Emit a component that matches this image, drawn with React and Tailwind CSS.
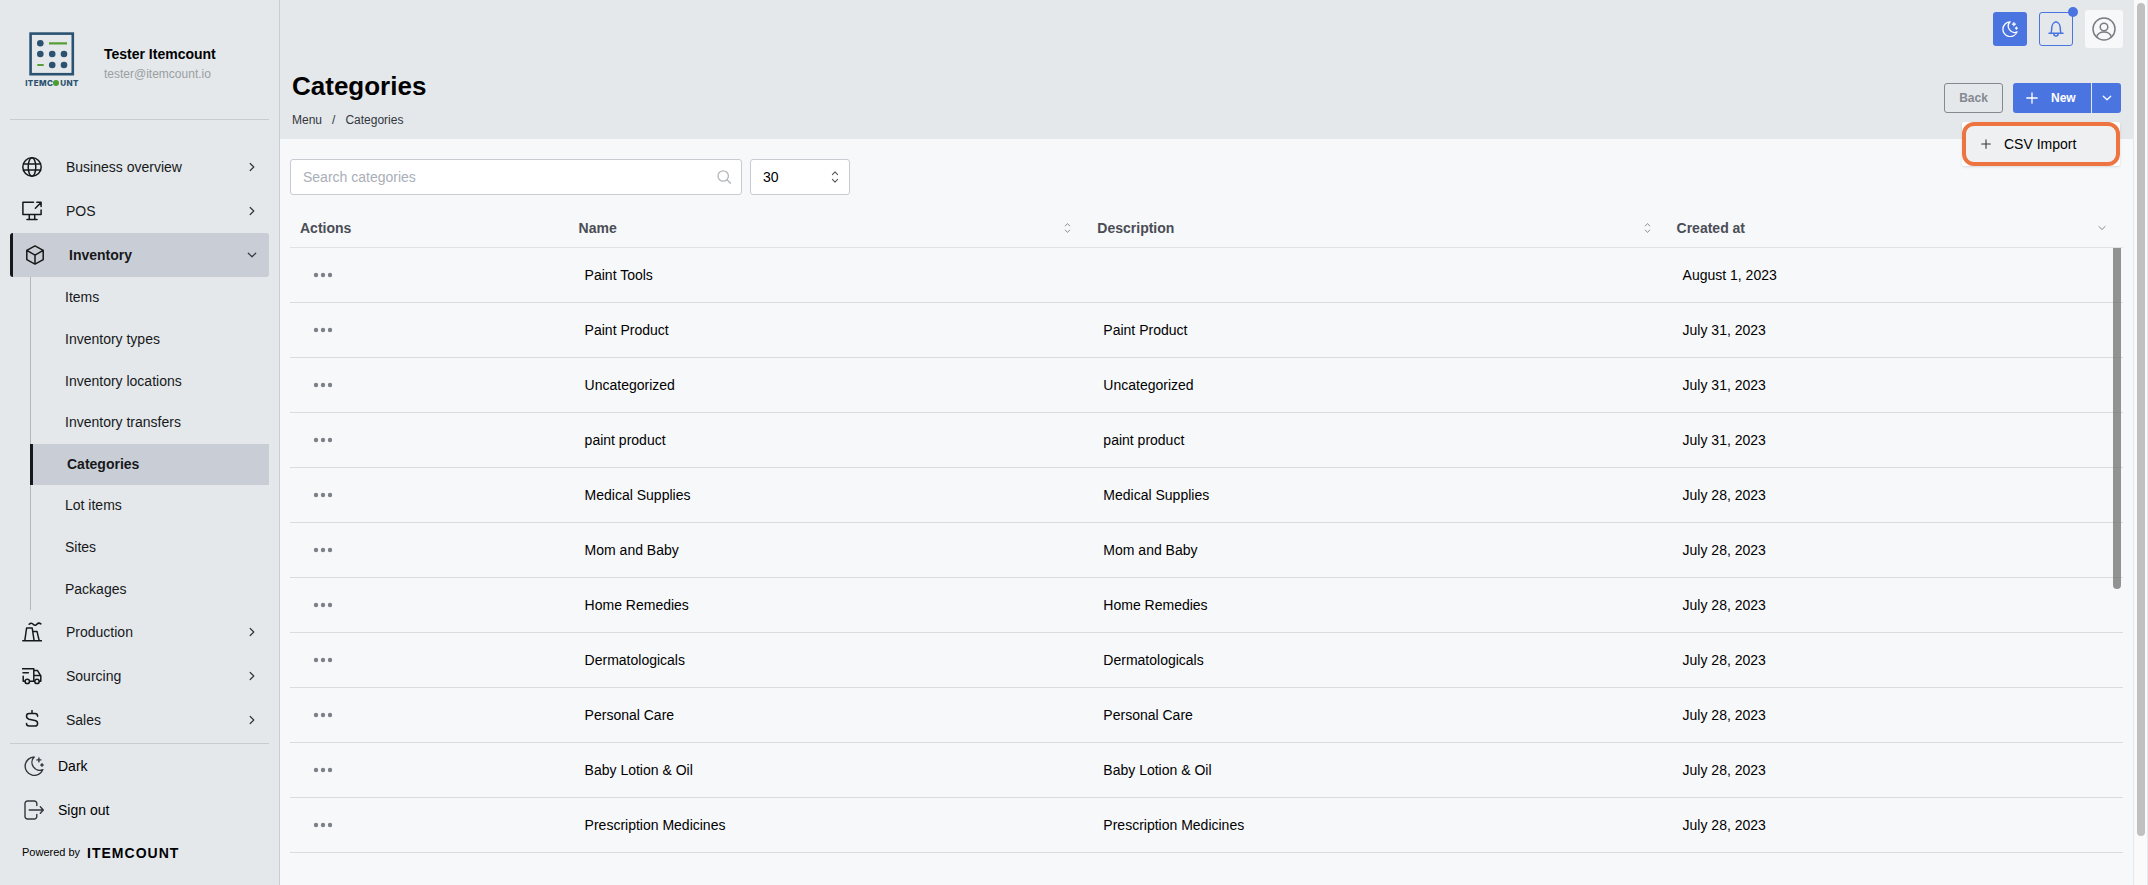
import React from "react";

const Icon = ({ children, className = "size-5", box = "0 0 20 20", width = 1.5 }) => (
  <svg
    viewBox={box}
    className={className}
    fill="none"
    stroke="currentColor"
    strokeWidth={width}
    strokeLinecap="round"
    strokeLinejoin="round"
    aria-hidden="true"
  >
    {children}
  </svg>
);

const GlobeIcon = () => (
  <Icon>
    <circle cx="10" cy="10" r="9.2" />
    <ellipse cx="10" cy="10" rx="3.8" ry="9.2" />
    <path d="M1.5 7h17M1.5 13h17" />
  </Icon>
);

const PosIcon = () => (
  <Icon>
    <path d="M11.5 1.2H.9v12.4h18.2V9M7.3 13.6v4.6M12.7 13.6v4.6M5 18.5h10" />
    <path d="M13.4 7.2l5.6-5.8M14.8 1.2h4.3v4.4" />
  </Icon>
);

const BoxIcon = () => (
  <Icon>
    <path d="M10 .9l8.2 4.5v9.2L10 19.1l-8.2-4.5V5.4L10 .9zM1.8 5.4l8.2 4.7 8.2-4.7M10 10.1v9" />
  </Icon>
);

const PlantIcon = () => (
  <Icon>
    <path d="M.8 18.8h18.8M2.8 18.6L4.6 6h5.6l1.9 12.6M11 9.4h4l2.2 9.2" />
    <path d="M7.2 2.3c1.3-1.6 2.9-1.4 4 0s2.6 1.4 3.7 0 2.6-1.4 4-.4" />
  </Icon>
);

const TruckIcon = () => (
  <Icon>
    <path d="M.4 2.8h11.4v12.4M1 6.7h5.4M1.2 10.2v5h1.5M7.8 15.2h4.6M11.8 4.4h3.6l3.4 5.4v5.4h-1.3M11.8 9.6h7" />
    <circle cx="5.3" cy="15.4" r="2.2" />
    <circle cx="15" cy="15.4" r="2.2" />
  </Icon>
);

const DollarIcon = () => (
  <Icon>
    <path d="M10 .4v3M15.6 6.2C15.6 4.600 14.600 3.600 13 3.600H7.200C5.600 3.600 4.500 4.700 4.500 6.300s1 2.500 2.500 2.900l6 1.300c1.600.4 2.600 1.300 2.600 2.900 0 1.700-1.100 2.700-2.800 2.700H7.200c-1.600 0-2.700-1-2.700-2.500" />
  </Icon>
);

const MoonIcon = ({ className = "size-5", width = 1.4 }) => (
  <Icon className={className} width={width}>
    <path d="M10.200 1A9.200 9.200 0 1 0 18.900 13.600 7.800 7.800 0 0 1 10.200 1z" />
    <path d="M14.900 1.900v4M12.900 3.900h4M18 7.800v2.400M16.800 9h2.400" />
  </Icon>
);

const SignOutIcon = () => (
  <Icon width={1.4}>
    <path d="M12.800 5.500V3.500A2.500 2.500 0 0 0 10.300 1H3.500A2.500 2.500 0 0 0 1 3.500v13A2.500 2.500 0 0 0 3.500 19h6.800a2.500 2.500 0 0 0 2.500-2.500v-2M5.200 10h14M16.300 6.800l3 3.200-3 3.200" />
  </Icon>
);

const BellIcon = () => (
  <Icon className="size-4" box="0 0 16 16" width={1.5}>
    <path d="M1 12.200h14M3 12c.7-1.300.7-2.700.7-4.500C3.700 4.200 5.500 1.300 8 .8c2.500.5 4.300 3.400 4.300 6.700 0 1.800 0 3.200.7 4.500" />
    <path d="M5.800 12.600c0 1.500.9 2.500 2.200 2.500s2.200-1 2.200-2.500" />
  </Icon>
);

const UserIcon = () => (
  <Icon className="size-6" box="0 0 24 24" width={1.5}>
    <circle cx="12" cy="12" r="11" />
    <circle cx="12" cy="10" r="3.8" />
    <path d="M4.600 20c1-3.300 3.800-5 7.400-5s6.400 1.700 7.400 5" />
  </Icon>
);

const SearchIcon = () => (
  <Icon className="size-[14px]" box="0 0 14 14" width={1.3}>
    <circle cx="6.200" cy="6" r="5.200" />
    <path d="M10 9.800l3.400 3.500" />
  </Icon>
);

const ChevronRight = () => (
  <Icon className="size-3" box="0 0 12 12" width={1.2}>
    <path d="M4.200 2.500L7.800 6l-3.600 3.500" />
  </Icon>
);

const ChevronDown = ({ className = "size-3" }) => (
  <Icon className={className} box="0 0 12 12" width={1.2}>
    <path d="M2.300 4.200L6 7.800l3.700-3.600" />
  </Icon>
);

const UpDown = ({ className }) => (
  <Icon className={className} box="0 0 8 14" width={1.1}>
    <path d="M1.400 4.600L4 1.800l2.600 2.800M1.400 9.400L4 12.200l2.600-2.800" />
  </Icon>
);

const PlusIcon = ({ className }) => (
  <Icon className={className} box="0 0 12 12" width={1.3}>
    <path d="M6 .8v10.400M.8 6h10.400" />
  </Icon>
);

const Logo = () => (
  <div className="flex w-14 flex-col items-center">
    <svg viewBox="0 0 46 44" className="h-[44px] w-[46px]" aria-hidden="true">
      <rect x="1.600" y="1.600" width="42.200" height="40.600" fill="none" stroke="#2b5270" strokeWidth="2.600" />
      <g fill="#2b5270">
        <circle cx="11.300" cy="11.300" r="3.300" />
        <circle cx="11.300" cy="22" r="3.300" />
        <circle cx="23.200" cy="22" r="3.300" />
        <circle cx="35" cy="22" r="3.300" />
        <circle cx="23.200" cy="33" r="3.300" />
        <circle cx="35" cy="33" r="3.300" />
      </g>
      <path d="M20 11.300h18M8.300 33h6.400" stroke="#559f35" strokeWidth="2.200" />
    </svg>
    <div className="mt-[2px] flex items-center font-['Inter',sans-serif] text-[8px] leading-[10px] font-extrabold tracking-wider text-[#2b5270]">
      ITEMC
      <span className="size-[6px] rounded-full bg-[#4c9c2e]" />
      <span className="pl-px">UNT</span>
    </div>
  </div>
);

const subItems = [
  "Items",
  "Inventory types",
  "Inventory locations",
  "Inventory transfers",
  "Categories",
  "Lot items",
  "Sites",
  "Packages",
];

const NavRow = ({ icon, label, active = false }) => (
  <button
    type="button"
    aria-expanded={active}
    className={
      active
        ? "flex h-11 w-full items-center rounded-[3px] border-l-[3px] border-[#17181a] bg-[#c9cdd5] pr-[11px] pl-3 text-left font-bold"
        : "flex h-11 w-full items-center pr-[11px] pl-3 text-left"
    }
  >
    {icon}
    <span className="ml-6 flex-1">{label}</span>
    <span className="text-[#33363b]">{active ? <ChevronDown /> : <ChevronRight />}</span>
  </button>
);

const Sidebar = () => (
  <aside className="flex w-[280px] shrink-0 flex-col border-r border-[#c9cdd1] bg-[#e4e8eb] px-[10px] text-sm text-[#17181a]">
    <div className="flex h-[120px] items-center border-b border-[#c9cdd1] pl-[14px]">
      <Logo />
      <div className="ml-6 pt-2 text-black">
        <p className="text-sm leading-5 font-bold">Tester Itemcount</p>
        <p className="text-xs leading-5 text-[#9b9ea2]">tester@itemcount.io</p>
      </div>
    </div>

    <nav className="mt-[25px] flex flex-col border-b border-[#c9cdd1] pb-px">
      <NavRow icon={<GlobeIcon />} label="Business overview" />
      <NavRow icon={<PosIcon />} label="POS" />
      <NavRow icon={<BoxIcon />} label="Inventory" active />
      <ul className="ml-5 grid h-[333px] auto-rows-fr">
        {subItems.map((item) =>
          item === "Categories" ? (
            <li key={item} className="flex border-l-[3px] border-[#17181a] bg-[#c9cdd5]">
              <a href="#categories" aria-current="page" className="flex flex-1 items-center pl-[34px] font-bold">
                {item}
              </a>
            </li>
          ) : (
            <li key={item} className="flex border-l border-[#b3b7bc]">
              <a href="#inventory" className="flex flex-1 items-center pb-px pl-[34px]">
                {item}
              </a>
            </li>
          )
        )}
      </ul>
      <NavRow icon={<PlantIcon />} label="Production" />
      <NavRow icon={<TruckIcon />} label="Sourcing" />
      <NavRow icon={<DollarIcon />} label="Sales" />
    </nav>

    <div className="flex flex-col text-black">
      <button type="button" className="flex h-11 items-center gap-[14px] pl-[14px] text-left">
        <span className="text-[#33363b]"><MoonIcon /></span>
        Dark
      </button>
      <button type="button" className="flex h-11 items-center gap-[14px] pl-[14px] text-left">
        <span className="text-[#33363b]"><SignOutIcon /></span>
        Sign out
      </button>
      <p className="flex h-[42px] items-center gap-[7px] pl-3 text-[11px]">
        Powered by
        <strong className="text-sm tracking-[1px]">ITEMCOUNT</strong>
      </p>
    </div>
  </aside>
);

const rows = [
  ["Paint Tools", "", "August 1, 2023"],
  ["Paint Product", "Paint Product", "July 31, 2023"],
  ["Uncategorized", "Uncategorized", "July 31, 2023"],
  ["paint product", "paint product", "July 31, 2023"],
  ["Medical Supplies", "Medical Supplies", "July 28, 2023"],
  ["Mom and Baby", "Mom and Baby", "July 28, 2023"],
  ["Home Remedies", "Home Remedies", "July 28, 2023"],
  ["Dermatologicals", "Dermatologicals", "July 28, 2023"],
  ["Personal Care", "Personal Care", "July 28, 2023"],
  ["Baby Lotion & Oil", "Baby Lotion & Oil", "July 28, 2023"],
  ["Prescription Medicines", "Prescription Medicines", "July 28, 2023"],
];

const HeadCell = ({ label, width, icon }) => (
  <th scope="col" className={`${width} h-[39px] border-b border-[#e0e2e5] p-0 text-left font-bold text-[#4a4d55]`}>
    {icon ? (
      <button type="button" className="flex w-full items-center justify-between pr-[16px] pl-[10px]">
        {label}
        <span className="text-[#85888d]">{icon}</span>
      </button>
    ) : (
      <span className="pl-[10px]">{label}</span>
    )}
  </th>
);

const CategoryTable = () => (
  <div className="relative mt-[14px]">
    <table className="w-full table-fixed border-separate border-spacing-0 text-sm text-black">
      <thead>
        <tr>
          <HeadCell label="Actions" width="w-[15.2%]" />
          <HeadCell label="Name" width="w-[28.3%]" icon={<UpDown className="h-3 w-[7px]" />} />
          <HeadCell label="Description" width="w-[31.6%]" icon={<UpDown className="h-3 w-[7px]" />} />
          <HeadCell label="Created at" width="w-[24.9%]" icon={<ChevronDown className="size-[10px]" />} />
        </tr>
      </thead>
      <tbody>
        {rows.map(([name, description, created], index) => (
          <tr key={index}>
            <td className="h-[55px] border-b border-[#dadcdf] p-0 pl-[23px]">
              <button type="button" aria-label={`Actions for ${name}`} className="flex text-[#7c8089]">
                <svg viewBox="0 0 20 6" className="h-[6px] w-5" fill="currentColor" aria-hidden="true">
                  <circle cx="3" cy="3" r="2.200" />
                  <circle cx="10" cy="3" r="2.200" />
                  <circle cx="17" cy="3" r="2.200" />
                </svg>
              </button>
            </td>
            <td className="border-b border-[#dadcdf] p-0 pl-4">{name}</td>
            <td className="border-b border-[#dadcdf] p-0 pl-4">{description}</td>
            <td className="border-b border-[#dadcdf] p-0 pl-4">{created}</td>
          </tr>
        ))}
      </tbody>
    </table>
    <div className="absolute top-[39px] right-[2px] h-[341px] w-2 rounded-b-full bg-[#6f7270]/75" />
  </div>
);

export default function App() {
  return (
    <div className="flex min-h-screen bg-[#f7f8fa] font-['Liberation_Sans',Arial,sans-serif] text-black">
      <Sidebar />

      <main className="flex min-w-0 flex-1 flex-col">
        <header className="flex h-[139px] items-start justify-between bg-[#e4e8eb] pr-[10px] pl-3">
          <div className="pt-[70px]">
            <h1 className="text-[26px] leading-8 font-bold">Categories</h1>
            <nav aria-label="Breadcrumb" className="mt-[9px] flex gap-[10px] text-xs leading-[18px] text-[#33363b]">
              <a href="#menu">Menu</a>
              <span>/</span>
              <a href="#categories">Categories</a>
            </nav>
          </div>

          <div className="flex flex-col items-end pt-[10px]">
            <div className="flex items-center gap-3">
              <button type="button" aria-label="Dark mode" className="flex size-[34px] items-center justify-center rounded-[3px] bg-[#4a74df] text-white">
                <MoonIcon className="size-4" width={1.6} />
              </button>
              <button type="button" aria-label="Notifications" className="relative flex size-[34px] items-center justify-center rounded-[3px] border border-[#4a74df] text-[#4a74df]">
                <BellIcon />
                <span className="absolute -top-[6px] -right-[6px] size-[10px] rounded-full bg-[#4a74df]" />
              </button>
              <button type="button" aria-label="Account" className="flex size-[38px] items-center justify-center rounded-[3px] bg-[#f7f8fa] text-[#7a7d84]">
                <UserIcon />
              </button>
            </div>

            <div className="mt-[35px] mr-[2px] flex gap-[10px] text-xs font-bold">
              <button type="button" className="h-[30px] w-[59px] rounded-[3px] border border-[#85888f] text-[#85888f]">
                Back
              </button>
              <div className="relative flex gap-px text-white">
                <button type="button" className="flex h-[30px] w-[78px] items-center rounded-l-[3px] bg-[#4a74df] pl-[13px]">
                  <PlusIcon className="size-3" />
                  <span className="ml-[13px]">New</span>
                </button>
                <button type="button" aria-label="More" className="flex h-[30px] w-[29px] items-center justify-center rounded-r-[3px] bg-[#4a74df]">
                  <ChevronDown />
                </button>
                <div className="absolute top-[39px] right-px z-10 w-[158px] rounded-[2px] bg-white shadow-sm">
                  <button
                    type="button"
                    className="flex h-11 w-full items-center gap-[13px] rounded-xl border-4 border-[#ed7440] bg-[#eff0f2] pl-[15px] text-sm font-normal text-black"
                  >
                    <PlusIcon className="size-[10px] text-[#33363b]" />
                    CSV Import
                  </button>
                </div>
              </div>
            </div>
          </div>
        </header>

        <section className="pt-5 pr-[10px] pl-[10px]">
          <div className="flex gap-2 text-sm">
            <label className="flex h-9 w-[452px] items-center rounded-[3px] border border-[#c6ccd2] bg-white pr-[10px] pl-3 text-[#b3b6bb]">
              <input
                type="text"
                aria-label="Search categories"
                placeholder="Search categories"
                className="min-w-0 flex-1 bg-transparent text-black outline-none placeholder:text-[#a9aeb8]"
              />
              <SearchIcon />
            </label>
            <div className="relative flex">
              <select
                aria-label="Rows per page"
                defaultValue="30"
                className="h-9 w-[100px] appearance-none rounded-[3px] border border-[#c6ccd2] bg-white pl-3 text-sm font-normal text-black"
              >
                <option>10</option>
                <option>30</option>
                <option>50</option>
              </select>
              <span className="pointer-events-none absolute inset-y-0 right-[11px] flex items-center text-[#55585e]">
                <UpDown className="h-[14px] w-2" />
              </span>
            </div>
          </div>
          <CategoryTable />
        </section>
      </main>

      <div className="w-[15px] shrink-0 border-x border-[#e6e7e8] bg-[#fafafa] px-[3px] pt-[3px]">
        <div className="h-[833px] w-2 rounded-full bg-[#c0c0c0]" />
      </div>
    </div>
  );
}
